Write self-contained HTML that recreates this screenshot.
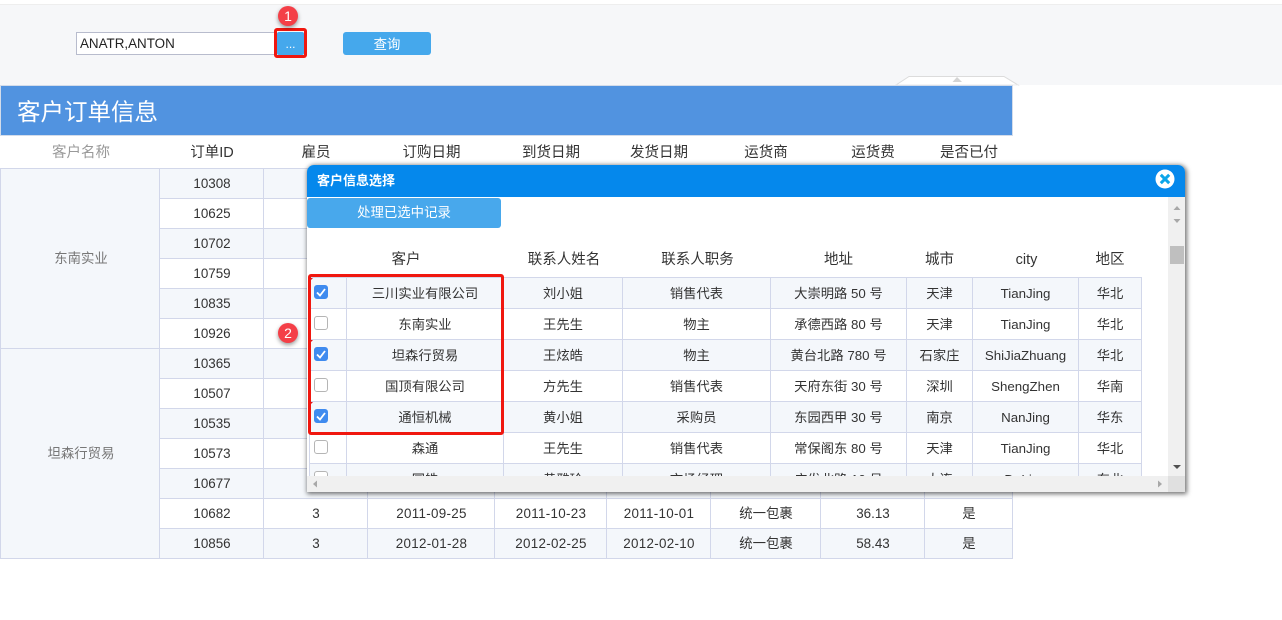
<!DOCTYPE html>
<html lang="zh">
<head>
<meta charset="utf-8">
<title>客户订单信息</title>
<style>
html,body{margin:0;padding:0;width:1282px;height:620px;overflow:hidden;background:#fff}
body{position:relative;font-family:"Liberation Sans","Noto Sans CJK SC",sans-serif;color:#333;font-size:13.4px}
.abs{position:absolute}
table{border-collapse:collapse;table-layout:fixed;position:absolute}
td{border:1px solid #d2d7ea;text-align:center;padding:0;overflow:hidden;white-space:nowrap}
#main{left:0;top:168px;width:1012px}
#main td{height:29px;line-height:29px;padding-left:1px;box-sizing:content-box}
#main td:nth-last-child(n+4):nth-last-child(-n+6){letter-spacing:.3px}
#main tr.s td{background:#f4f7fb}
#main td.c{background:#f4f7fb;color:#777;padding-left:2px}
.th{position:absolute;top:137px;height:32px;line-height:32px;text-align:center;font-size:14.5px;color:#333}
#dlg{left:307px;top:165px;width:878px;height:327px;background:#fff;box-shadow:1px 1px 5px 1px rgba(0,0,0,.55);border-radius:7px 7px 0 0;overflow:hidden}
#dh{left:0;top:0;width:878px;height:32px;background:#0588ec;color:#fff;font-weight:bold;line-height:31px;text-indent:10px;font-size:13px}
#inner{left:0;top:32px;width:862px;height:279px;overflow:hidden}
#dt{left:2px;top:80px;width:832px}
#dt td{height:28px;line-height:28px;padding-top:2px;font-size:13.3px}
#dt tr.s td{background:#f4f7fb}
.dth{position:absolute;top:46px;height:34px;line-height:34px;text-align:center;font-size:14.5px;color:#333}
.cb{position:absolute;left:7px;width:14px;height:14px;border-radius:3px;box-sizing:border-box;background:#fff;border:1px solid #b5b5b5}
.cb.on{background:#3f8bef;border-color:#3f8bef}
.cb svg{position:absolute;left:-1px;top:-1px}
.mk{position:absolute;left:3px;width:0;height:0;border-top:3px solid #e0141a;border-right:3px solid transparent}
.badge{position:absolute;width:20px;height:20px;border-radius:50%;background:#f43f47;color:#fff;text-align:center;line-height:20px;font-size:14px;box-shadow:0 2px 4px rgba(0,0,0,.4)}
.rb{position:absolute;box-sizing:border-box;border:3px solid #f0170f;border-radius:3px}
</style>
</head>
<body>
<div class="abs" style="left:0;top:0;width:1282px;height:85px;background:#f6f7f9"></div>
<div class="abs" style="left:0;top:0;width:1282px;height:4px;background:#fff;border-bottom:1px solid #eee"></div>

<div class="abs" style="left:76px;top:32px;width:199px;height:23px;box-sizing:border-box;background:#fff;border:1px solid #b8bccd;line-height:22px;padding-left:3px;font-size:13.4px;color:#222">ANATR,ANTON</div>
<div class="abs" style="left:277px;top:32px;width:27px;height:23px;background:#45a8ec;border-radius:2px;color:#fff;text-align:center;line-height:25px;font-size:12px">...</div>
<div class="abs" style="left:343px;top:32px;width:88px;height:23px;background:#45a8ec;border-radius:3px;color:#fff;text-align:center;line-height:25px;font-size:13.4px">查询</div>

<svg class="abs" style="left:890px;top:74px" width="134" height="12"><path d="M6 11 L19 2.5 H114 L128 11 Z" fill="#fff" stroke="#dcdcdc"/><path d="M6 11.5H128" stroke="#f6f7f9" stroke-width="1.4"/><path d="M62.500 8 L67 3 L72 8 Z" fill="#d4d4d4"/></svg>

<div class="abs" style="left:0;top:85px;width:1013px;height:51px;box-sizing:border-box;background:#5193e0;border:1px solid #d3dcea;color:#fff;font-size:23.5px;line-height:52px;padding-left:16px;overflow:hidden">客户订单信息</div>

<div class="th" style="left:1px;width:160px;color:#999">客户名称</div>
<div class="th" style="left:160px;width:104px">订单ID</div>
<div class="th" style="left:264px;width:104px">雇员</div>
<div class="th" style="left:368px;width:127px">订购日期</div>
<div class="th" style="left:495px;width:112px">到货日期</div>
<div class="th" style="left:607px;width:104px">发货日期</div>
<div class="th" style="left:711px;width:110px">运货商</div>
<div class="th" style="left:821px;width:104px">运货费</div>
<div class="th" style="left:925px;width:88px">是否已付</div>

<table id="main">
<colgroup><col style="width:159px"><col style="width:104px"><col style="width:104px"><col style="width:127px"><col style="width:112px"><col style="width:104px"><col style="width:110px"><col style="width:104px"><col style="width:88px"></colgroup>
<tr class="s"><td class="c" rowspan="6">东南实业</td><td>10308</td><td>7</td><td>2011-09-18</td><td>2011-10-16</td><td>2011-09-24</td><td>急速快递</td><td>1.61</td><td>是</td></tr>
<tr><td>10625</td><td>3</td><td>2011-08-08</td><td>2011-09-05</td><td>2011-08-14</td><td>统一包裹</td><td>43.90</td><td>是</td></tr>
<tr class="s"><td>10702</td><td>4</td><td>2011-10-13</td><td>2011-11-24</td><td>2011-10-21</td><td>统一包裹</td><td>23.94</td><td>是</td></tr>
<tr><td>10759</td><td>3</td><td>2011-11-28</td><td>2011-12-26</td><td>2011-12-12</td><td>联邦货运</td><td>11.99</td><td>是</td></tr>
<tr class="s"><td>10835</td><td>1</td><td>2012-01-15</td><td>2012-02-12</td><td>2012-01-21</td><td>联邦货运</td><td>69.53</td><td>是</td></tr>
<tr><td>10926</td><td>4</td><td>2012-03-04</td><td>2012-04-01</td><td>2012-03-11</td><td>联邦货运</td><td>39.92</td><td>是</td></tr>
<tr class="s"><td class="c" rowspan="7">坦森行贸易</td><td>10365</td><td>3</td><td>2011-11-27</td><td>2011-12-25</td><td>2011-12-02</td><td>统一包裹</td><td>22.00</td><td>是</td></tr>
<tr><td>10507</td><td>7</td><td>2011-04-15</td><td>2011-05-13</td><td>2011-04-22</td><td>急速快递</td><td>47.45</td><td>是</td></tr>
<tr class="s"><td>10535</td><td>4</td><td>2011-05-13</td><td>2011-06-10</td><td>2011-05-21</td><td>急速快递</td><td>15.64</td><td>是</td></tr>
<tr><td>10573</td><td>7</td><td>2011-06-19</td><td>2011-07-17</td><td>2011-06-20</td><td>联邦货运</td><td>84.84</td><td>是</td></tr>
<tr class="s"><td>10677</td><td>1</td><td>2011-09-22</td><td>2011-10-20</td><td>2011-09-26</td><td>联邦货运</td><td>4.03</td><td>是</td></tr>
<tr><td>10682</td><td>3</td><td>2011-09-25</td><td>2011-10-23</td><td>2011-10-01</td><td>统一包裹</td><td>36.13</td><td>是</td></tr>
<tr class="s"><td>10856</td><td>3</td><td>2012-01-28</td><td>2012-02-25</td><td>2012-02-10</td><td>统一包裹</td><td>58.43</td><td>是</td></tr>
</table>

<div id="dlg" class="abs">
  <div id="dh" class="abs">客户信息选择</div>
  <svg class="abs" style="left:848px;top:4px" width="20" height="20"><circle cx="10" cy="10" r="9.500" fill="#fff"/><path d="M5.800 5.800 L14.200 14.200 M14.200 5.800 L5.800 14.200" stroke="#0da6ea" stroke-width="3"/></svg>
  <div id="inner" class="abs">
    <div class="abs" style="left:0;top:1px;width:194px;height:30px;background:#48a8ec;border-radius:3px;color:#fff;text-align:center;line-height:30px;font-size:13.4px">处理已选中记录</div>
    <div class="dth" style="left:39px;width:120px">客户</div>
    <div class="dth" style="left:197px;width:120px">联系人姓名</div>
    <div class="dth" style="left:316px;width:149px">联系人职务</div>
    <div class="dth" style="left:463px;width:137px">地址</div>
    <div class="dth" style="left:599px;width:67px">城市</div>
    <div class="dth" style="left:666px;width:107px">city</div>
    <div class="dth" style="left:771px;width:64px">地区</div>
    <table id="dt">
    <colgroup><col style="width:37px"><col style="width:157px"><col style="width:119px"><col style="width:148px"><col style="width:136px"><col style="width:66px"><col style="width:106px"><col style="width:63px"></colgroup>
    <tr class="s"><td></td><td>三川实业有限公司</td><td>刘小姐</td><td>销售代表</td><td>大崇明路 50 号</td><td>天津</td><td>TianJing</td><td>华北</td></tr>
    <tr><td></td><td>东南实业</td><td>王先生</td><td>物主</td><td>承德西路 80 号</td><td>天津</td><td>TianJing</td><td>华北</td></tr>
    <tr class="s"><td></td><td>坦森行贸易</td><td>王炫皓</td><td>物主</td><td>黄台北路 780 号</td><td>石家庄</td><td>ShiJiaZhuang</td><td>华北</td></tr>
    <tr><td></td><td>国顶有限公司</td><td>方先生</td><td>销售代表</td><td>天府东街 30 号</td><td>深圳</td><td>ShengZhen</td><td>华南</td></tr>
    <tr class="s"><td></td><td>通恒机械</td><td>黄小姐</td><td>采购员</td><td>东园西甲 30 号</td><td>南京</td><td>NanJing</td><td>华东</td></tr>
    <tr><td></td><td>森通</td><td>王先生</td><td>销售代表</td><td>常保阁东 80 号</td><td>天津</td><td>TianJing</td><td>华北</td></tr>
    <tr class="s"><td></td><td>国皓</td><td>黄雅玲</td><td>市场经理</td><td>广发北路 10 号</td><td>大连</td><td>DaLian</td><td>东北</td></tr>
    </table>
    <div class="cb on" style="top:88px"><svg width="14" height="14"><path d="M3 7.500 L6 10.500 L11 4" fill="none" stroke="#fff" stroke-width="1.800"/></svg></div>
    <div class="cb" style="top:119px"></div>
    <div class="cb on" style="top:150px"><svg width="14" height="14"><path d="M3 7.500 L6 10.500 L11 4" fill="none" stroke="#fff" stroke-width="1.800"/></svg></div>
    <div class="cb" style="top:181px"></div>
    <div class="cb on" style="top:212px"><svg width="14" height="14"><path d="M3 7.500 L6 10.500 L11 4" fill="none" stroke="#fff" stroke-width="1.800"/></svg></div>
    <div class="cb" style="top:243px"></div>
    <div class="cb" style="top:274px"></div>
    <div class="mk" style="top:81px"></div>
    <div class="mk" style="top:143px"></div>
    <div class="mk" style="top:205px"></div>
  </div>
  <!-- vertical scrollbar -->
  <div class="abs" style="left:861px;top:32px;width:17px;height:279px;background:#f0f0f0"></div>
  <svg class="abs" style="left:862px;top:32px" width="16" height="279">
    <path d="M4.500 13 L8 9 L11.500 13 Z" fill="#a8a8a8"/>
    <path d="M4.500 22 L11.500 22 L8 26 Z" fill="#a8a8a8"/>
    <rect x="1" y="49" width="14" height="18" fill="#bfbfbf"/>
    <path d="M4 268 L12 268 L8 272 Z" fill="#505050"/>
  </svg>
  <!-- horizontal scrollbar -->
  <div class="abs" style="left:0;top:311px;width:878px;height:16px;background:#f0f0f0"></div>
  <div class="abs" style="left:861px;top:311px;width:17px;height:16px;background:#e0e0e0"></div>
  <svg class="abs" style="left:0;top:311px" width="862" height="16">
    <path d="M10 4.500 L10 11.500 L6 8 Z" fill="#a8a8a8"/>
    <path d="M851 4.500 L851 11.500 L855 8 Z" fill="#a8a8a8"/>
  </svg>
</div>

<div class="rb" style="left:274px;top:28px;width:33px;height:30px"></div>
<div class="rb" style="left:308px;top:274px;width:196px;height:161px"></div>
<div class="badge" style="left:278px;top:6px">1</div>
<div class="badge" style="left:278px;top:323px">2</div>
</body>
</html>
